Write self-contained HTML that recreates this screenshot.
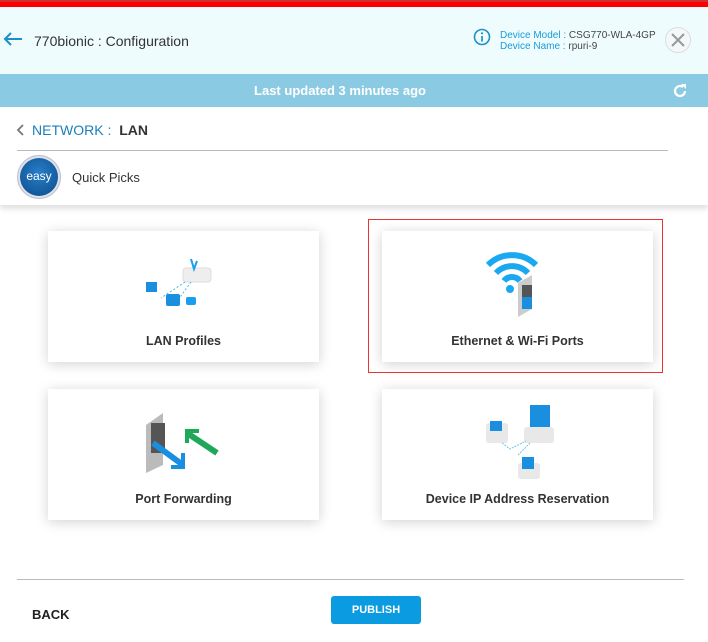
<!DOCTYPE html>
<html><head><style>
*{margin:0;padding:0;box-sizing:border-box}
body{width:708px;height:642px;background:#fff;font-family:"Liberation Sans",sans-serif;position:relative;overflow:hidden}
.a{position:absolute}
.card{position:absolute;background:#fff;box-shadow:0 2px 12px rgba(0,0,0,.18);width:271px;height:131px}
.card .t{position:absolute;left:0;right:0;top:103px;text-align:center;font-size:12.5px;font-weight:bold;color:#333}
</style></head><body>
<div class="a" style="left:0;top:0;width:708px;height:2px;background:#c33"></div>
<div class="a" style="left:0;top:2px;width:708px;height:5px;background:#f00"></div>
<div class="a" style="left:0;top:7px;width:708px;height:67px;background:#effcfd"></div>
<svg class="a" style="left:2px;top:31px" width="22" height="16"><path d="M20 8H3M9 2L3 8l6 6" stroke="#1a8fc9" stroke-width="2" fill="none"/></svg>
<div class="a" style="left:34px;top:33px;font-size:14px;color:#333">770bionic : Configuration</div>
<svg class="a" style="left:473px;top:28px" width="18" height="18"><circle cx="9" cy="9" r="7.5" stroke="#1a8fc9" stroke-width="1.6" fill="none"/><rect x="8.2" y="8" width="1.7" height="5.5" fill="#1a8fc9"/><circle cx="9" cy="5.3" r="1.1" fill="#1a8fc9"/></svg>
<div class="a" style="left:500px;top:30px;font-size:10px;line-height:11px;color:#1a9ad6">Device Model : <span style="color:#444">CSG770-WLA-4GP</span><br>Device Name : <span style="color:#444">rpuri-9</span></div>
<div class="a" style="left:665px;top:27px;width:26px;height:26px;border-radius:50%;border:1px solid #ddd;background:#f4f8f8"></div>
<svg class="a" style="left:670px;top:32px" width="16" height="16"><path d="M2 2L14 14M14 2L2 14" stroke="#999" stroke-width="2"/></svg>
<div class="a" style="left:0;top:74px;width:708px;height:33px;background:#8bcae3"></div>
<div class="a" style="left:0;top:83px;width:680px;text-align:center;font-size:13px;font-weight:bold;color:#fff">Last updated 3 minutes ago</div>
<svg class="a" style="left:671px;top:82px" width="18" height="18"><path d="M14 9a5 5 0 1 1-2-4" stroke="#fff" stroke-width="2.2" fill="none"/><path d="M10 2h5v5z" fill="#fff"/></svg>
<svg class="a" style="left:16px;top:124px" width="10" height="12"><path d="M7 1L2 6l5 5" stroke="#777" stroke-width="1.8" fill="none"/></svg>
<div class="a" style="left:32px;top:122px;font-size:14px;color:#1a7fb8">NETWORK : <b style="color:#333;margin-left:4px">LAN</b></div>
<div class="a" style="left:17px;top:150px;width:651px;height:1px;background:#bbb"></div>
<div class="a" style="left:0;top:151px;width:708px;height:54px;box-shadow:0 4px 5px rgba(0,0,0,.12);background:#fff"></div>
<div class="a" style="left:17px;top:155px;width:44px;height:44px;border-radius:50%;background:#dde2ea;border:1px solid #bbc"></div>
<div class="a" style="left:20px;top:158px;width:38px;height:38px;border-radius:50%;background:radial-gradient(circle at 50% 40%,#2a7ec8,#0a4b8a);color:#fff;font-size:12px;text-align:center;line-height:36px">easy</div>
<div class="a" style="left:72px;top:170px;font-size:13px;color:#333">Quick Picks</div>

<div class="a" style="left:368px;top:219px;width:295px;height:154px;border:1px solid #e33"></div>
<div class="card" style="left:48px;top:231px">
<svg class="a" style="left:95px;top:25px" width="80" height="55"><rect x="40" y="12" width="28" height="14" rx="3" fill="#eee" stroke="#ddd"/><path d="M48 3l3 10 3-8" stroke="#1aa0e8" stroke-width="2" fill="none"/><path d="M42 26L18 42M48 26L35 44" stroke="#4bb8f0" stroke-width="1" stroke-dasharray="2 2"/><rect x="3" y="26" width="11" height="10" fill="#1a8fe0"/><rect x="23" y="38" width="14" height="12" rx="2" fill="#1a8fe0"/><rect x="43" y="41" width="10" height="8" rx="2" fill="#1a9ef0"/></svg>
<div class="t">LAN Profiles</div></div>
<div class="card" style="left:382px;top:231px">
<svg class="a" style="left:100px;top:12px" width="80" height="75"><path d="M6 22a34 34 0 0 1 48 0" stroke="#1aa8f0" stroke-width="6" fill="none"/><path d="M14 30a22 22 0 0 1 32 0" stroke="#1aa8f0" stroke-width="6" fill="none"/><path d="M22 38a10 10 0 0 1 16 0" stroke="#1aa8f0" stroke-width="6" fill="none"/><circle cx="28" cy="46" r="4" fill="#1aa8f0"/><path d="M36 40l14-8v34l-14 8z" fill="#ccc"/><rect x="40" y="42" width="10" height="24" fill="#555"/><rect x="40" y="54" width="10" height="12" fill="#1a8fe0"/></svg>
<div class="t">Ethernet &amp; Wi-Fi Ports</div></div>
<div class="card" style="left:48px;top:389px">
<svg class="a" style="left:95px;top:14px" width="80" height="75"><path d="M3 22L20 10v52L3 70z" fill="#bbb"/><path d="M8 20h14v30H8z" fill="#555"/><path d="M10 40l30 22" stroke="#1a8fe0" stroke-width="6"/><path d="M40 50v14H28" stroke="#1a8fe0" stroke-width="4" fill="none"/><path d="M74 50L44 30" stroke="#1fa85a" stroke-width="6"/><path d="M44 40V28h12" stroke="#1fa85a" stroke-width="4" fill="none"/></svg>
<div class="t">Port Forwarding</div></div>
<div class="card" style="left:382px;top:389px">
<svg class="a" style="left:100px;top:14px" width="80" height="80"><rect x="4" y="20" width="22" height="20" rx="3" fill="#e8e8e8"/><rect x="8" y="18" width="12" height="10" fill="#1a8fe0"/><rect x="42" y="24" width="30" height="16" rx="3" fill="#e8e8e8"/><rect x="48" y="2" width="20" height="22" fill="#1a8fe0"/><rect x="36" y="60" width="22" height="16" rx="3" fill="#e8e8e8"/><rect x="40" y="54" width="12" height="12" fill="#1a8fe0"/><path d="M20 40l8 6 16-8M48 40L36 52" stroke="#6cc6f0" stroke-width="1" fill="none" stroke-dasharray="2 1"/></svg>
<div class="t">Device IP Address Reservation</div></div>

<div class="a" style="left:17px;top:579px;width:667px;height:1px;background:#bbb"></div>
<div class="a" style="left:32px;top:607px;font-size:13px;font-weight:bold;color:#222">BACK</div>
<div class="a" style="left:331px;top:596px;width:90px;height:28px;border-radius:3px;background:#0b9be0;color:#fff;font-size:11px;font-weight:bold;text-align:center;line-height:29px">PUBLISH</div>
</body></html>
